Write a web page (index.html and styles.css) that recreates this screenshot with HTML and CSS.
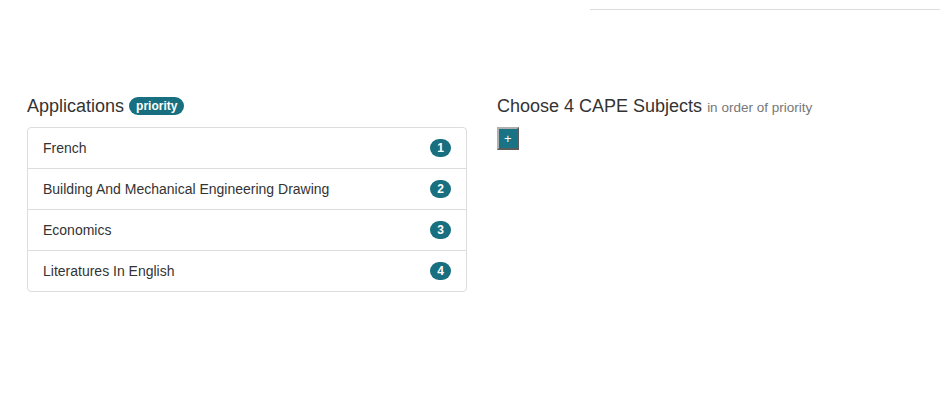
FILE: index.html
```html
<!DOCTYPE html>
<html>
<head>
<meta charset="utf-8">
<link rel="stylesheet" href="styles.css">
</head>
<body>
<div class="topbar"><div class="topline"></div></div>
<div class="row">
  <div class="col">
    <h4 class="title">Applications <span class="badge">priority</span></h4>
    <ul class="list-group">
      <li class="list-group-item"><span>French</span><span class="badge">1</span></li>
      <li class="list-group-item"><span>Building And Mechanical Engineering Drawing</span><span class="badge">2</span></li>
      <li class="list-group-item"><span>Economics</span><span class="badge">3</span></li>
      <li class="list-group-item"><span>Literatures In English</span><span class="badge">4</span></li>
    </ul>
  </div>
  <div class="col">
    <h4 class="title">Choose 4 CAPE Subjects <small>in order of priority</small></h4>
    <button class="add">+</button>
  </div>
</div>
</body>
</html>
```
FILE: styles.css
```css
html, body {
  margin: 0;
  padding: 0;
  background: #fff;
}
body {
  font-family: "Liberation Sans", Arial, sans-serif;
  font-size: 14px;
  line-height: 20px;
  color: #333;
}
.topbar {
  display: flex;
  justify-content: flex-end;
  padding-top: 9px;
}
.topline {
  width: 350px;
  border-top: 1px solid #ddd;
}
.row {
  display: flex;
  gap: 30px;
  padding: 0 3px 0 27px;
  margin-top: 86px;
}
.col {
  flex: 0 0 440px;
}
.title {
  margin: 0 0 10px;
  font-size: 18px;
  font-weight: 500;
  line-height: 20px;
  height: 21px;
}
.title small {
  font-size: 13.5px;
  color: #777;
  font-weight: 400;
}
.badge {
  display: inline-block;
  min-width: 7px;
  padding: 3px 7px;
  font-size: 12px;
  font-weight: bold;
  line-height: 12px;
  color: #fff;
  text-align: center;
  white-space: nowrap;
  vertical-align: middle;
  background-color: #176f7f;
  border-radius: 10px;
  position: relative;
  top: -1px;
}
.list-group {
  list-style: none;
  margin: 0;
  padding: 0;
}
.list-group-item {
  display: flex;
  justify-content: space-between;
  align-items: center;
  padding: 10px 15px;
  border: 1px solid #ddd;
  margin-bottom: -1px;
  background: #fff;
}
.list-group-item:first-child {
  border-radius: 4px 4px 0 0;
}
.list-group-item:last-child {
  border-radius: 0 0 4px 4px;
  margin-bottom: 0;
}
.list-group-item .badge {
  top: 0;
}
.add {
  display: block;
  background: #1a7384;
  color: #fff;
  border: 2px outset #b0b0b0;
  padding: 1px 5px;
  font-family: "Liberation Sans", Arial, sans-serif;
  font-size: 13px;
  line-height: 17px;
  margin-left: 0;
}
```
